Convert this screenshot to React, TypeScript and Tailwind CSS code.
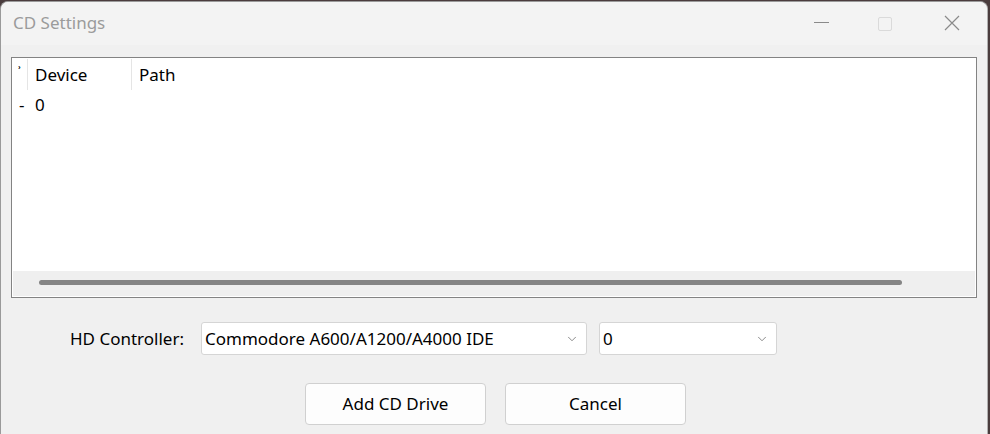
import { ChevronDown } from 'lucide-react'

export default function App() {
  return (
    <div className="w-[990px] h-[434px] bg-[#4a3c3d] pt-[1px] pr-[2px] overflow-hidden" style={{ fontFamily: '"Noto Sans", "Open Sans", sans-serif' }}>
      <div className="h-[442px] bg-[#f0f0f0] rounded-[8px] border border-[#9a9a9a] border-r-[#b0b0b0] flex flex-col overflow-hidden">
        {/* Title bar */}
        <div className="h-[43px] bg-[#f3f3f3] flex items-center shrink-0">
          <span className="ml-[12px] text-[17px] text-[#9b9b9b] mt-[-2px]">CD Settings</span>
          <div className="ml-auto flex items-center h-full">
            <div className="w-[64px] flex justify-center">
              <div className="w-[15px] h-[1px] bg-[#8a8a8a] mt-[-2px]" />
            </div>
            <div className="w-[64px] flex justify-center">
              <div className="w-[14px] h-[14px] border border-[#dadada] rounded-[2px]" />
            </div>
            <div className="w-[70px] flex justify-center">
              <svg width="16" height="16" viewBox="0 0 16 16" className="mt-[-2px]">
                <path d="M1 1 L15 15 M15 1 L1 15" stroke="#8a8a8a" strokeWidth="1.2" fill="none" />
              </svg>
            </div>
          </div>
        </div>

        {/* List view */}
        <div className="mx-[10px] mt-[12px] h-[241px] border border-[#838383] bg-white flex flex-col">
          <div className="h-[33px] flex text-[17px] text-black">
            <div className="w-[16px] flex items-center justify-center border-r border-[#e5e5e5] my-[1px]">
              <span className="text-[13px] leading-none mt-[-6px] font-bold">ʾ</span>
            </div>
            <div className="w-[104px] pl-[7px] flex items-center border-r border-[#e5e5e5] my-[1px]">Device</div>
            <div className="pl-[7px] flex items-center">Path</div>
          </div>
          <div className="h-[28px] flex items-center text-[17px] text-black">
            <span className="w-[16px] pl-[7px]">-</span>
            <span className="pl-[7px]">0</span>
          </div>
          <div className="flex-1" />
          <div className="h-[25px] bg-[#efefef] flex items-center mb-[1px] mx-[1px]">
            <div className="ml-[26px] w-[863px] h-[5px] rounded-full bg-[#858585] mt-[-2px]" />
          </div>
        </div>

        {/* Controller row */}
        <div className="flex items-center mt-[24px] text-[17px] text-black">
          <span className="ml-[69px] w-[131px]">HD Controller:</span>
          <div className="w-[386px] h-[33px] bg-white border border-[#d5d5d5] rounded-[3px] flex items-center pl-[3px] pr-[7px]">
            <span className="flex-1">Commodore A600/A1200/A4000 IDE</span>
            <ChevronDown size={14} strokeWidth={1.3} className="text-[#666]" />
          </div>
          <div className="ml-[12px] w-[178px] h-[33px] bg-white border border-[#d5d5d5] rounded-[3px] flex items-center pl-[3px] pr-[7px]">
            <span className="flex-1">0</span>
            <ChevronDown size={14} strokeWidth={1.3} className="text-[#666]" />
          </div>
        </div>

        {/* Buttons */}
        <div className="flex mt-[28px] ml-[304px] gap-[19px] text-[17px] text-black">
          <button className="w-[181px] h-[42px] bg-[#fdfdfd] border border-[#d0d0d0] rounded-[4px]">Add CD Drive</button>
          <button className="w-[181px] h-[42px] bg-[#fdfdfd] border border-[#d0d0d0] rounded-[4px]">Cancel</button>
        </div>
      </div>
    </div>
  )
}
